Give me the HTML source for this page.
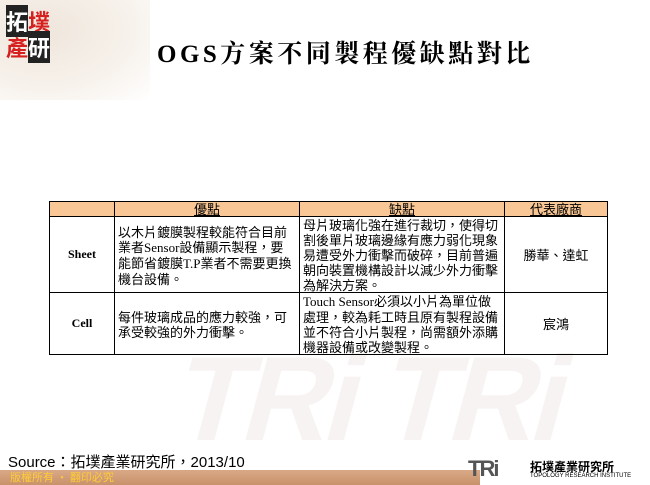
<!DOCTYPE html>
<html><head><meta charset="utf-8"><style>
body{margin:0;width:650px;height:485px;position:relative;overflow:hidden;background:#fff;font-family:"Liberation Serif","Noto Serif CJK SC","Noto Sans CJK TC",serif}
.map{position:absolute;left:0;top:0;width:150px;height:100px;background:radial-gradient(ellipse at 30% 30%,#efe6dc,#f7f2ec 60%,#fff 100%)}
.logo{position:absolute;left:6px;top:8px;width:56px;height:52px;font-family:"Noto Sans CJK TC",sans-serif;font-size:22px;line-height:26px;font-weight:bold}
h1{position:absolute;left:157px;top:34px;margin:0;font-size:25px;font-weight:bold;letter-spacing:3.5px;color:#000;font-family:"Liberation Serif","Noto Serif CJK SC",serif}
.wm{position:absolute;left:180px;top:330px;font:bold 120px "Liberation Sans",sans-serif;color:#f8f3f3;transform:skewX(-15deg);letter-spacing:-5px}
table{position:absolute;left:49px;top:201px;width:558px;table-layout:fixed;border-collapse:collapse;font-size:13px;font-family:"Noto Sans CJK TC",sans-serif;line-height:15px}
td,th{border:1px solid #000;padding:0 3px;vertical-align:middle}
th{background:#f9c795;font-weight:normal;height:14px;line-height:14px;text-decoration:underline}
.h{font-family:"Liberation Serif",serif;font-weight:bold;text-align:center;font-size:12px}
.l{font-family:"Liberation Serif",serif}
.src{position:absolute;left:8px;top:451px;font:15px "Liberation Sans","Noto Sans CJK TC",sans-serif}
.bar{position:absolute;left:0;top:470px;width:480px;height:15px;background:linear-gradient(#d9a987,#c8916a);color:#ffcc33;font:11px "Noto Sans CJK TC",sans-serif;padding-left:10px;box-sizing:border-box;line-height:15px}
.tri{position:absolute;left:468px;top:456px;font:bold 22px "Liberation Sans",sans-serif;color:#555;letter-spacing:-2px}
.tri2{position:absolute;left:530px;top:458px;font:bold 12px "Noto Sans CJK TC",sans-serif}
.tri3{position:absolute;left:530px;top:473px;font:6px "Liberation Sans",sans-serif}
</style></head><body>
<div class="map"></div>
<div class="logo"><span style="background:#222;color:#fff">拓</span><span style="color:#d62020">墣</span><br><span style="color:#d62020">產</span><span style="background:#222;color:#fff">研</span></div>
<h1>OGS方案不同製程優缺點對比</h1>
<div class="wm">TRi TRi</div>
<table>
<colgroup><col style="width:65px"><col style="width:185px"><col style="width:205px"><col style="width:103px"></colgroup>
<tr><th></th><th>優點</th><th>缺點</th><th>代表廠商</th></tr>
<tr style="height:75px"><td class="h">Sheet</td><td>以木片鍍膜製程較能符合目前業者<span class="l">Sensor</span>設備顯示製程，要能節省鍍膜<span class="l">T.P</span>業者不需要更換機台設備。</td><td>母片玻璃化強在進行裁切，使得切割後單片玻璃邊緣有應力弱化現象易遭受外力衝擊而破碎，目前普遍朝向裝置機構設計以減少外力衝擊為解決方案。</td><td style="text-align:center">勝華、達虹</td></tr>
<tr style="height:62px"><td class="h">Cell</td><td>每件玻璃成品的應力較強，可承受較強的外力衝擊。</td><td><span class="l">Touch Sensor</span>必須以小片為單位做處理，較為耗工時且原有製程設備並不符合小片製程，尚需額外添購機器設備或改變製程。</td><td style="text-align:center">宸鴻</td></tr>
</table>
<div class="src">Source：拓墣產業研究所，2013/10</div>
<div class="bar">版權所有 • 翻印必究</div>
<div class="tri">TRi</div>
<div class="tri2">拓墣產業研究所</div>
<div class="tri3">TOPOLOGY RESEARCH INSTITUTE</div>
</body></html>
